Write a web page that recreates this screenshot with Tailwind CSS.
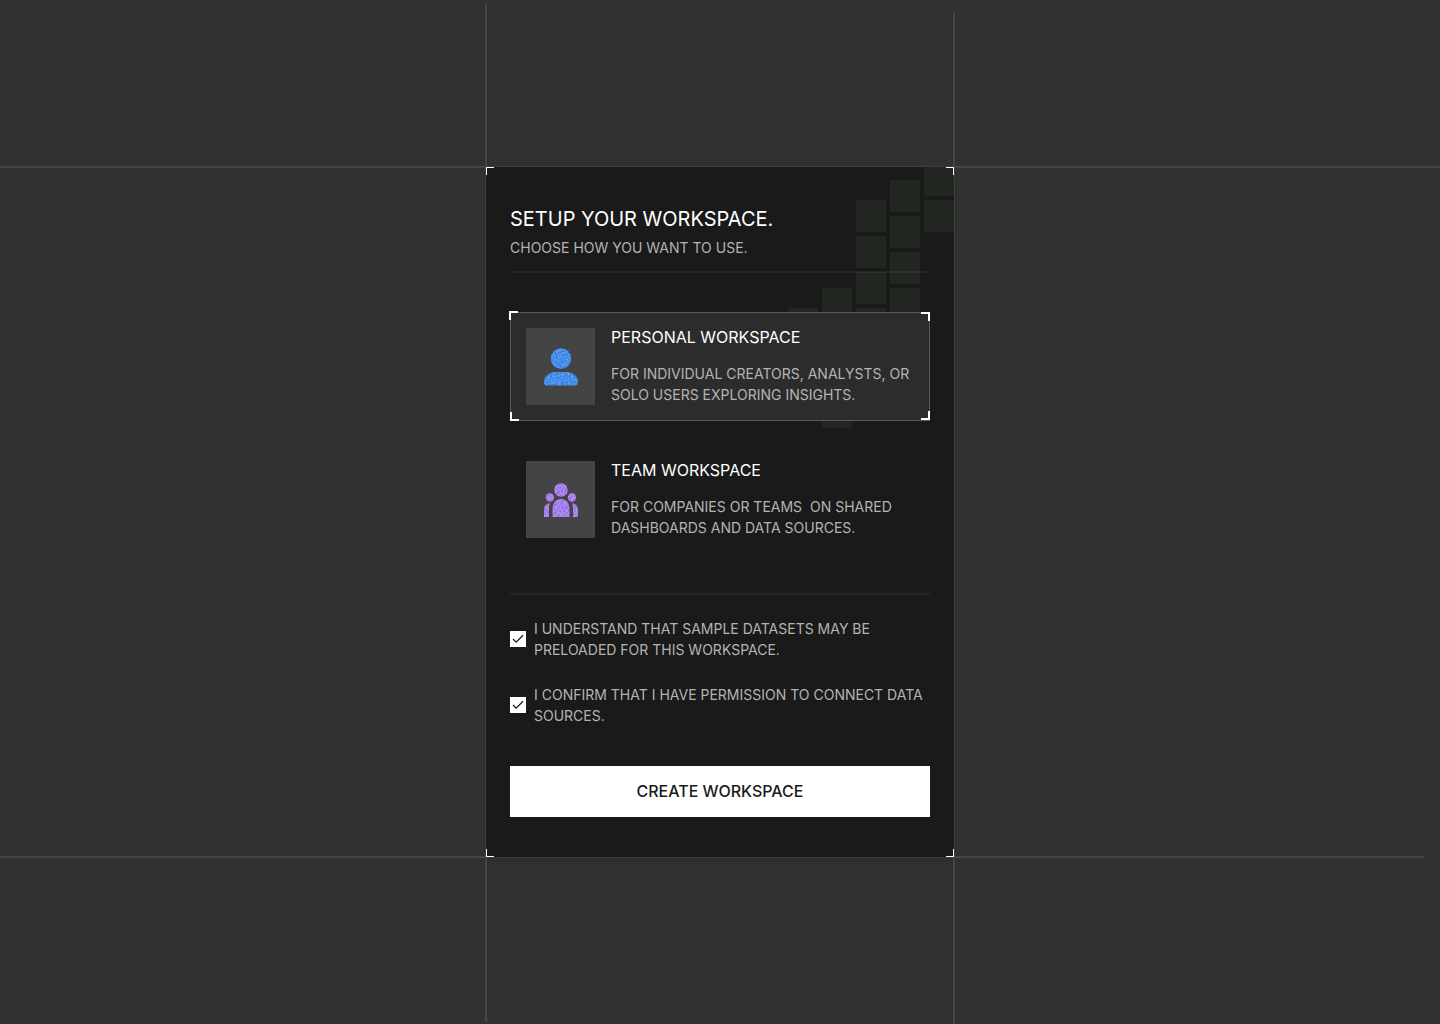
<!DOCTYPE html>
<html lang="en">
  <head>
    <meta charset="UTF-8" />
    <meta name="viewport" content="width=device-width, initial-scale=1.0" />
    <script src="https://cdn.jsdelivr.net/npm/@tailwindcss/browser@4"></script>
    <title>Setup your workspace</title>
  </head>
  <body class="bg-[#313131] font-['Inter',sans-serif]">
    <main
      class="min-h-screen flex items-center justify-center overflow-hidden"
    >
      <div class="relative w-full max-w-[468px]">
        <!-- Guide lines -->
        <div class="absolute -left-px -top-[164px] -bottom-[165px] w-0.5 bg-[#464646]"></div>
        <div class="absolute -right-px -top-[154px] -bottom-[167px] w-0.5 bg-[#464646]"></div>
        <div class="absolute -top-px -left-[486px] -right-[486px] h-0.5 bg-[#464646]"></div>
        <div class="absolute -bottom-px -left-[486px] -right-[470px] h-0.5 bg-[#464646]"></div>

        <!-- Card -->
        <form
          class="relative bg-[#1a1a1a] ring-1 ring-[#3e3e3e] shadow-md px-6 py-10"
        >
          <svg
            class="absolute top-0 right-0"
            width="166"
            height="261"
            fill="#212620"
            aria-hidden="true"
          >
            <path
              d="M136 0h30v29h-30zM136 33h30v32h-30zM102 13h30v32h-30zM102 49h30v32h-30zM102 85h30v32h-30zM102 121h30v32h-30zM68 33h30v32H68zM68 69h30v32H68zM68 105h30v32H68zM68 141h30v32H68zM34 121h30v32H34zM34 157h30v32H34zM34 193h30v32H34zM34 229h30v32H34zM0 141h30v32H0z"
            />
          </svg>
          <span class="absolute top-0 left-0 size-2 border-t border-l border-white"></span>
          <span class="absolute top-0 right-0 size-2 border-t border-r border-white"></span>
          <span class="absolute bottom-0 left-0 size-2 border-b border-l border-white"></span>
          <span class="absolute bottom-0 right-0 size-2 border-b border-r border-white"></span>

          <div class="relative">
            <h1 class="text-xl leading-6 text-white">SETUP YOUR WORKSPACE.</h1>
            <p class="mt-2 text-sm leading-[17px] text-[#b4b4b4]">
              CHOOSE HOW YOU WANT TO USE.
            </p>
            <hr class="mt-[15px] mb-[39px] h-0.5 border-0 bg-white/5" />

            <!-- Workspace type -->
            <div class="flex flex-col gap-6">
              <label
                class="relative flex gap-4 border border-[#5a5a5a] bg-[#2c2c2c] p-[15px] cursor-pointer"
              >
                <input type="radio" name="workspace" value="personal" class="sr-only" checked />
                <span class="absolute -top-0.5 -left-0.5 size-[9px] border-t-2 border-l-2 border-white"></span>
                <span class="absolute -top-px -right-px size-[9px] border-t-2 border-r-2 border-white"></span>
                <span class="absolute -bottom-px -left-px size-[9px] border-b-2 border-l-2 border-white"></span>
                <span class="absolute bottom-0 -right-px size-[9px] border-b-2 border-r-2 border-white"></span>
                <span
                  class="flex w-[69px] shrink-0 items-center justify-center bg-[#444444]"
                >
                  <svg width="42" height="42" viewBox="0 0 42 42" aria-hidden="true">
                    <filter id="grainBlue" x="0" y="0" width="1" height="1" color-interpolation-filters="sRGB">
                      <feTurbulence type="fractalNoise" baseFrequency="0.6" numOctaves="2" seed="4" />
                      <feColorMatrix values="0.45 0 0 0 0.06  0.4 0 0 0 0.36  0.3 0 0 0 0.77  0 0 0 0 1" />
                      <feComposite operator="in" in2="SourceGraphic" />
                    </filter>
                    <g fill="#4a90e8" filter="url(#grainBlue)">
                      <ellipse cx="21" cy="12.7" rx="10.2" ry="10.4" />
                      <path d="M4 36.400c0-5.800 5-10.400 11-10.400h12c6 0 11 4.600 11 10.400 0 2-1 3-2.500 3h-29C5 39.400 4 38.400 4 36.400z" />
                    </g>
                  </svg>
                </span>
                <span class="flex flex-col gap-4">
                  <span class="text-base leading-[19px] text-white">PERSONAL WORKSPACE</span>
                  <span class="text-sm leading-[21px] text-[#b4b4b4]">
                    FOR INDIVIDUAL CREATORS, ANALYSTS, OR SOLO USERS EXPLORING
                    INSIGHTS.
                  </span>
                </span>
              </label>

              <label
                class="flex gap-4 border border-transparent p-[15px] cursor-pointer"
              >
                <input type="radio" name="workspace" value="team" class="sr-only" />
                <span
                  class="flex w-[69px] shrink-0 items-center justify-center bg-[#444444]"
                >
                  <svg width="42" height="42" viewBox="0 0 42 42" aria-hidden="true">
                    <filter id="grainPurple" x="0" y="0" width="1" height="1" color-interpolation-filters="sRGB">
                      <feTurbulence type="fractalNoise" baseFrequency="0.6" numOctaves="2" seed="9" />
                      <feColorMatrix values="0.35 0 0 0 0.47  0.4 0 0 0 0.3  0.3 0 0 0 0.77  0 0 0 0 1" />
                      <feComposite operator="in" in2="SourceGraphic" />
                    </filter>
                    <g fill="#a07be8" filter="url(#grainPurple)">
                      <circle cx="21" cy="11" r="6.800" />
                      <circle cx="10" cy="18.500" r="4.200" />
                      <circle cx="32" cy="18.500" r="4.200" />
                      <path d="M12.500 38v-9.500a8.500 8.500 0 0 1 17 0v9.500z" />
                      <path d="M4 38v-7.500c0-3.500 2.500-6 6-6.300-.7 1.400-1 3-1 4.800v9z" />
                      <path d="M38 38v-7.500c0-3.500-2.500-6-6-6.300.7 1.400 1 3 1 4.800v9z" />
                    </g>
                  </svg>
                </span>
                <span class="flex flex-col gap-4">
                  <span class="text-base leading-[19px] text-white">TEAM WORKSPACE</span>
                  <span class="text-sm leading-[21px] text-[#b4b4b4]">
                    FOR COMPANIES OR TEAMS&nbsp; ON SHARED DASHBOARDS AND DATA
                    SOURCES.
                  </span>
                </span>
              </label>
            </div>

            <hr class="mt-[39px] mb-[23px] h-0.5 border-0 bg-white/5" />

            <!-- Confirmations -->
            <div class="flex flex-col gap-6">
              <label class="flex items-center gap-2 cursor-pointer">
                <span class="relative size-4 shrink-0">
                  <input type="checkbox" name="samples" class="peer block size-4 appearance-none bg-white" checked />
                  <svg
                    class="absolute inset-0 hidden peer-checked:block pointer-events-none"
                    width="16"
                    height="16"
                    fill="none"
                    stroke="#1a1a1a"
                    stroke-width="1.300"
                  >
                    <path d="M3 8l3.200 3.200L13 4.300" />
                  </svg>
                </span>
                <span class="text-sm leading-[21px] text-[#b4b4b4]">
                  I UNDERSTAND THAT SAMPLE DATASETS MAY BE PRELOADED FOR THIS
                  WORKSPACE.
                </span>
              </label>
              <label class="flex items-center gap-2 cursor-pointer">
                <span class="relative size-4 shrink-0">
                  <input type="checkbox" name="permission" class="peer block size-4 appearance-none bg-white" checked />
                  <svg
                    class="absolute inset-0 hidden peer-checked:block pointer-events-none"
                    width="16"
                    height="16"
                    fill="none"
                    stroke="#1a1a1a"
                    stroke-width="1.300"
                  >
                    <path d="M3 8l3.200 3.200L13 4.300" />
                  </svg>
                </span>
                <span class="text-sm leading-[21px] text-[#b4b4b4]">
                  I CONFIRM THAT I HAVE PERMISSION TO CONNECT DATA SOURCES.
                </span>
              </label>
            </div>

            <button
              type="submit"
              class="mt-10 block w-full bg-white py-4 text-base leading-[19px] font-medium text-[#1a1a1a] hover:bg-gray-200"
            >
              CREATE WORKSPACE
            </button>
          </div>
        </form>
      </div>
    </main>
  </body>
</html>
